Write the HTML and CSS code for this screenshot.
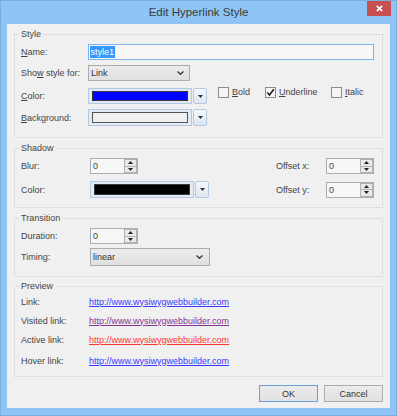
FILE: index.html
```html
<!DOCTYPE html>
<html>
<head>
<meta charset="utf-8">
<title>Edit Hyperlink Style</title>
<link rel="stylesheet" href="styles.css">
</head>
<body>
<div class="window">
  <div class="titlebar">
    <span></span>
    <span class="title">Edit Hyperlink Style</span>
    <button class="close" aria-label="Close"><svg width="7" height="7" viewBox="0 0 7 7"><path d="M0.8 0.8 L6.2 6.2 M6.2 0.8 L0.8 6.2" stroke="#fff" stroke-width="1.7" fill="none"/></svg></button>
  </div>
  <div class="client">
    <fieldset class="group g-style">
      <legend>Style</legend>
      <div class="row r1">
        <span class="lbl"><u>N</u>ame:</span>
        <div class="textbox"><span class="selected">style1</span></div>
      </div>
      <div class="row r2">
        <span class="lbl">Sho<u>w</u> style for:</span>
        <div class="combo w102"><span>Link</span><svg width="7" height="4" viewBox="0 0 7 4"><polyline points="0.5,0.5 3.5,3.3 6.5,0.5" stroke="#333" stroke-width="1.2" fill="none"/></svg></div>
      </div>
      <div class="row r3">
        <span class="lbl"><u>C</u>olor:</span>
        <div class="cp"><div class="cp-field"><div class="swatch blue"></div></div><div class="cp-btn"><svg width="5" height="3" viewBox="0 0 5 3"><polygon points="0,0 5,0 2.5,3" fill="#333"/></svg></div></div>
        <div class="checks">
          <label class="check cb-b"><span class="box"></span><span><u>B</u>old</span></label>
          <label class="check cb-u"><span class="box"><svg width="9" height="9" viewBox="0 0 9 9"><path d="M1.3 4.6 L3.5 7 L7.8 1.2" stroke="#1a1a1a" stroke-width="1.5" fill="none"/></svg></span><span><u>U</u>nderline</span></label>
          <label class="check cb-i"><span class="box"></span><span><u>I</u>talic</span></label>
        </div>
      </div>
      <div class="row r4">
        <span class="lbl"><u>B</u>ackground:</span>
        <div class="cp"><div class="cp-field"><div class="swatch light"></div></div><div class="cp-btn"><svg width="5" height="3" viewBox="0 0 5 3"><polygon points="0,0 5,0 2.5,3" fill="#333"/></svg></div></div>
      </div>
    </fieldset>

    <fieldset class="group g-shadow">
      <legend>Shadow</legend>
      <div class="row s1">
        <span class="lbl wide">Blur:</span>
        <div class="spin"><span class="spin-val">0</span><div class="spin-btns"><span class="sb"><svg width="5" height="3" viewBox="0 0 5 3"><polygon points="0,3 5,3 2.5,0" fill="#222"/></svg></span><span class="sb"><svg width="5" height="3" viewBox="0 0 5 3"><polygon points="0,0 5,0 2.5,3" fill="#222"/></svg></span></div></div>
        <span class="lbl-off">Offset x:</span>
        <div class="spin"><span class="spin-val">0</span><div class="spin-btns"><span class="sb"><svg width="5" height="3" viewBox="0 0 5 3"><polygon points="0,3 5,3 2.5,0" fill="#222"/></svg></span><span class="sb"><svg width="5" height="3" viewBox="0 0 5 3"><polygon points="0,0 5,0 2.5,3" fill="#222"/></svg></span></div></div>
      </div>
      <div class="row s2">
        <span class="lbl wide">Color:</span>
        <div class="cp"><div class="cp-field"><div class="swatch black"></div></div><div class="cp-btn"><svg width="5" height="3" viewBox="0 0 5 3"><polygon points="0,0 5,0 2.5,3" fill="#333"/></svg></div></div>
        <span class="lbl-off">Offset y:</span>
        <div class="spin"><span class="spin-val">0</span><div class="spin-btns"><span class="sb"><svg width="5" height="3" viewBox="0 0 5 3"><polygon points="0,3 5,3 2.5,0" fill="#222"/></svg></span><span class="sb"><svg width="5" height="3" viewBox="0 0 5 3"><polygon points="0,0 5,0 2.5,3" fill="#222"/></svg></span></div></div>
      </div>
    </fieldset>

    <fieldset class="group g-trans">
      <legend>Transition</legend>
      <div class="row t1">
        <span class="lbl wide">Duration:</span>
        <div class="spin"><span class="spin-val">0</span><div class="spin-btns"><span class="sb"><svg width="5" height="3" viewBox="0 0 5 3"><polygon points="0,3 5,3 2.5,0" fill="#222"/></svg></span><span class="sb"><svg width="5" height="3" viewBox="0 0 5 3"><polygon points="0,0 5,0 2.5,3" fill="#222"/></svg></span></div></div>
      </div>
      <div class="row t2">
        <span class="lbl wide">Timing:</span>
        <div class="combo w120"><span>linear</span><svg width="7" height="4" viewBox="0 0 7 4"><polyline points="0.5,0.5 3.5,3.3 6.5,0.5" stroke="#333" stroke-width="1.2" fill="none"/></svg></div>
      </div>
    </fieldset>

    <fieldset class="group g-prev">
      <legend>Preview</legend>
      <div class="prow"><span class="plbl">Link:</span><a class="lnk l-link" href="#">http://www.wysiwygwebbuilder.com</a></div>
      <div class="prow"><span class="plbl">Visited link:</span><a class="lnk l-visited" href="#">http://www.wysiwygwebbuilder.com</a></div>
      <div class="prow"><span class="plbl">Active link:</span><a class="lnk l-active" href="#">http://www.wysiwygwebbuilder.com</a></div>
      <div class="prow last"><span class="plbl">Hover link:</span><a class="lnk l-hover" href="#">http://www.wysiwygwebbuilder.com</a></div>
    </fieldset>

    <div class="actions">
      <button class="btn default">OK</button>
      <button class="btn">Cancel</button>
    </div>
  </div>
</div>
</body>
</html>
```

FILE: styles.css
```css
* { box-sizing: border-box; }
html, body { margin: 0; padding: 0; }
body {
  width: 397px;
  height: 416px;
  overflow: hidden;
  font-family: "Liberation Sans", Arial, sans-serif;
  font-size: 9px;
  color: #444;
}
.window {
  width: 397px;
  height: 416px;
  background: #8ec5f5;
  border: 1px solid #77afe3;
  display: flex;
  flex-direction: column;
  padding: 0 6px 7px 6px;
}
.titlebar {
  height: 23px;
  flex: none;
  display: grid;
  grid-template-columns: 1fr auto 1fr;
  align-items: start;
}
.title {
  line-height: 22px;
  font-size: 11.5px;
  color: #3a3a3a;
  white-space: nowrap;
}
.close {
  justify-self: end;
  margin-right: -1px;
  width: 24px;
  height: 15px;
  padding: 0;
  border: none;
  background: #c75050;
  display: flex;
  align-items: center;
  justify-content: center;
}
.client {
  flex: 1;
  background: #f0f0f0;
  padding: 5px 7px 0 7px;
  display: flex;
  flex-direction: column;
}
.group {
  margin: 0;
  min-width: 0;
  border: 1px dotted #d4cdcd;
  padding: 4px 4px 10px 4px;
}
.group legend {
  padding: 0 2px;
  height: 11px;
  line-height: 11px;
  font-size: 9px;
  color: #444;
}
.g-style { padding-bottom: 11px; }
.g-shadow { margin-top: 5px; padding-bottom: 9px; }
.g-trans { margin-top: 5px; padding-bottom: 10px; }
.g-prev { margin-top: 4px; padding-top: 0; padding-bottom: 6px; }

.row {
  display: flex;
  align-items: center;
  height: 16px;
  padding-left: 2px;
  padding-right: 4px;
}
.r2 { margin-top: 5px; }
.r3 { margin-top: 7px; }
.r4 { margin-top: 5px; height: 17px; }
.s1 { height: 16px; }
.s2 { margin-top: 7px; height: 17px; }
.t1 { height: 16px; }
.t2 { margin-top: 4px; height: 18px; }

.lbl { width: 67px; flex: none; white-space: nowrap; }
.lbl.wide { width: 69px; }
.lbl-off { width: 50px; margin-left: auto; flex: none; white-space: nowrap; }

.textbox {
  width: 286px;
  height: 16px;
  border: 1px solid #7fb4e9;
  background: #f7f7f7;
  display: flex;
  align-items: center;
  padding-left: 1px;
}
.selected {
  background: #3399ff;
  color: #fff;
  line-height: 12px;
  padding: 0 0.5px;
}
.combo {
  height: 100%;
  border: 1px solid #acacac;
  background: linear-gradient(#ececec, #e0e0e0);
  display: flex;
  align-items: center;
  justify-content: space-between;
  padding: 0 5px 0 2px;
  color: #333;
}
.w102 { width: 102px; }
.w120 { width: 120px; padding-right: 6px; }

.cp {
  display: flex;
  width: 119px;
  height: 100%;
  gap: 1px;
  flex: none;
}
.cp-field {
  flex: 1;
  border: 1px solid #b6c9e2;
  background: #e2eaf4;
  padding: 2px 3px;
}
.swatch { height: 100%; border: 1px solid #3a3a3a; }
.swatch.blue { background: #0000ff; }
.swatch.light { background: #f0f0f0; border-color: #555; }
.swatch.black { background: #000; }
.cp-btn {
  width: 14px;
  border: 1px solid #b6c9e2;
  border-radius: 2px;
  background: linear-gradient(#f4f8fc, #dce6f2);
  display: flex;
  align-items: center;
  justify-content: center;
}

.checks {
  display: flex;
  align-self: flex-start;
  margin-top: -1px;
  margin-left: 11px;
}
.check {
  display: flex;
  align-items: center;
  gap: 3px;
  height: 11px;
  line-height: 11px;
  white-space: nowrap;
}
.cb-b { width: 47px; }
.cb-u { width: 66px; }
.box {
  width: 11px;
  height: 11px;
  border: 1px solid #8c8c8c;
  background: #f5f5f5;
  display: flex;
  align-items: center;
  justify-content: center;
  flex: none;
}

.spin {
  width: 48px;
  height: 16px;
  border: 1px solid #abadb3;
  background: #f7f7f7;
  display: flex;
  flex: none;
}
.spin-val { flex: 1; padding-left: 2px; line-height: 14px; color: #444; }
.spin-btns {
  width: 13px;
  display: flex;
  flex-direction: column;
}
.sb {
  flex: 1;
  border: 1px solid #b3b3b3;
  background: #e9e9e9;
  display: flex;
  align-items: center;
  justify-content: center;
}
.sb + .sb { border-top: none; }

.prow {
  display: flex;
  align-items: center;
  height: 19px;
  padding-left: 2px;
}
.prow.last { margin-top: 2px; }
.plbl { width: 68px; flex: none; }
.lnk { text-decoration: underline; white-space: nowrap; }
.l-link { color: #3a3aff; }
.l-visited { color: #85358f; }
.l-active { color: #ff3535; }
.l-hover { color: #3a3aff; }

.actions {
  display: flex;
  justify-content: flex-end;
  gap: 6px;
  margin-top: 8px;
}
.btn {
  width: 59px;
  height: 17px;
  padding: 0;
  border: 1px solid #adadad;
  background: linear-gradient(#ececec, #e1e1e1);
  font-family: "Liberation Sans", Arial, sans-serif;
  font-size: 9px;
  color: #333;
}
.btn.default { border-color: #6c9fd8; }
```
